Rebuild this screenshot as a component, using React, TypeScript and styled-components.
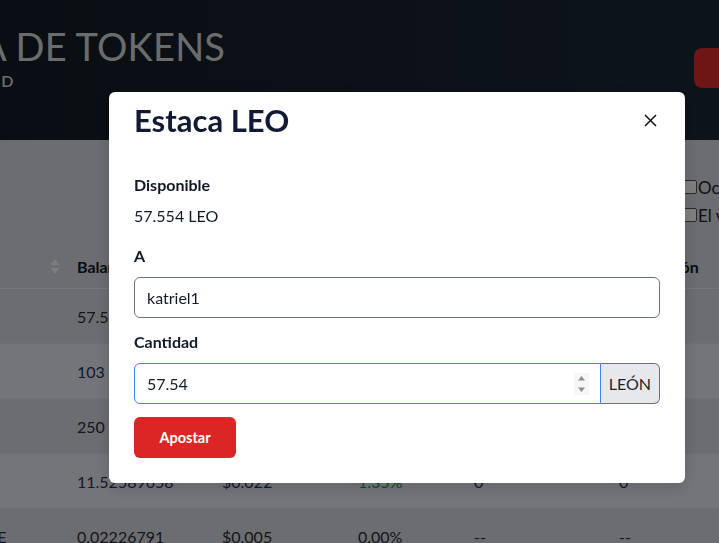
import React, { useEffect, useRef } from "react";
import styled, { createGlobalStyle } from "styled-components";

const FONT = `"Lato", "Noto Sans", "DejaVu Sans", sans-serif`;

const Global = createGlobalStyle`
  html, body { margin: 0; padding: 0; }
  body { font-family: ${FONT}; overflow: hidden; background: #d8dae2; color: #212529; }
  * { box-sizing: border-box; }
`;

const Shell = styled.div`
  width: 100vw;
  height: 100vh;
  overflow: hidden;
`;

/* page is wider than the window and scrolled horizontally */
const Page = styled.div`
  width: 1160px;
  margin-left: -200px;
`;

const Header = styled.header`
  height: 140px;
  padding: 24px 45px 0 15px;
  display: flex;
  align-items: flex-start;
  justify-content: space-between;
  background: linear-gradient(90deg, #131a24 0%, #1b2b38 100%);
`;

const TitleBlock = styled.div`
  display: flex;
  flex-direction: column;
  gap: 3px;
`;

const PageTitle = styled.h1`
  margin: 0;
  font-size: 38px;
  line-height: 44px;
  font-weight: 400;
  color: #d6d8dc;
  letter-spacing: 0.2px;
`;

const PageSub = styled.div`
  font-size: 16px;
  line-height: 20px;
  font-weight: 600;
  color: #d6d8dc;
  letter-spacing: 1px;
`;

const HeaderButton = styled.button`
  margin-top: 24px;
  width: 221px;
  height: 40px;
  border: 0;
  border-radius: 8px;
  background: #dc2a2a;
  color: #fff;
  font: 700 15px ${FONT};
`;

const Content = styled.main`
  padding: 35px 45px 0;
`;

const Toolbar = styled.div`
  display: flex;
  justify-content: flex-end;
`;

const Filters = styled.div`
  width: 232px;
  display: flex;
  flex-direction: column;
  gap: 4px;
`;

const FilterRow = styled.label`
  height: 24px;
  display: flex;
  align-items: center;
  gap: 1px;
  font-size: 17px;
  color: #212529;
  white-space: nowrap;
`;

const Check = styled.span`
  width: 14px;
  height: 14px;
  border: 1px solid #555;
  background: #fff;
  border-radius: 2px;
`;

const cols = "224px 145px 136px 116px 145px 1fr";

const TableWrap = styled.div`
  margin-top: 18px;
`;

const HeadRow = styled.div`
  display: grid;
  grid-template-columns: ${cols};
  height: 44px;
  align-items: center;
  border-bottom: 1px solid #eef0f4;
`;

const HeadCell = styled.div`
  padding: 0 9px 0 8px;
  font-size: 16px;
  font-weight: 700;
  color: #111827;
  display: flex;
  align-items: center;
  justify-content: space-between;
  white-space: nowrap;
`;

const Row = styled.div<{ $alt?: boolean }>`
  display: grid;
  grid-template-columns: ${cols};
  height: 55px;
  align-items: center;
  background: ${(p) => (p.$alt ? "#e8eaf0" : "#d8dae2")};
  color: ${(p) => (p.$alt ? "#1e3566" : "#2a2d38")};
  border-bottom: 1px solid #dfe1e7;
`;

const Cell = styled.div<{ $tone?: "up" }>`
  padding: 0 8px;
  font-size: 16px;
  white-space: nowrap;
  color: ${(p) => (p.$tone === "up" ? "#15a046" : "inherit")};
`;

const Backdrop = styled.div`
  position: fixed;
  inset: 0;
  background: rgba(0, 0, 0, 0.5);
`;

const Dialog = styled.div`
  position: absolute;
  top: 92px;
  left: 109px;
  width: 576px;
  background: #fff;
  border-radius: 6px;
  box-shadow: 0 4px 16px rgba(0, 0, 0, 0.15);
`;

const DialogHeader = styled.div`
  height: 56px;
  padding: 0 25px;
  display: flex;
  align-items: center;
  justify-content: space-between;
`;

const DialogTitle = styled.h2`
  margin: 0;
  font-size: 31px;
  line-height: 36px;
  font-weight: 700;
  color: #111a33;
`;

const CloseButton = styled.button`
  width: 20px;
  height: 20px;
  padding: 0;
  border: 0;
  background: transparent;
  display: flex;
  align-items: center;
  justify-content: center;
  cursor: pointer;
`;

const DialogBody = styled.div`
  padding: 26px 25px 25px;
  display: flex;
  flex-direction: column;
`;

const Field = styled.div<{ $gap: number; $after: number }>`
  display: flex;
  flex-direction: column;
  gap: ${(p) => p.$gap}px;
  margin-bottom: ${(p) => p.$after}px;
`;

const Label = styled.label`
  font-size: 16px;
  line-height: 22px;
  font-weight: 700;
  color: #111827;
`;

const Value = styled.div`
  font-size: 16px;
  line-height: 22px;
  color: #111827;
`;

const TextInput = styled.input`
  height: 41px;
  width: 100%;
  padding: 0 12px;
  border: 1px solid #6b7280;
  border-radius: 6px;
  font: 400 16px ${FONT};
  color: #111827;
  outline: none;
  background: #fff;
`;

const Group = styled.div`
  display: flex;
  height: 41px;
`;

const NumberBox = styled.div`
  flex: 1;
  display: flex;
  align-items: center;
  border: 1px solid #3b82f6;
  border-radius: 6px 0 0 6px;
  padding-right: 11px;
  background: #fff;
`;

const NumberInput = styled.input`
  flex: 1;
  min-width: 0;
  height: 100%;
  border: 0;
  padding: 0 12px;
  background: transparent;
  font: 400 16px ${FONT};
  color: #111827;
  outline: none;
  caret-color: #111;
`;

const Spinner = styled.span`
  width: 15px;
  height: 22px;
  display: flex;
  background: #f6f6f6;
`;

const Addon = styled.span`
  display: flex;
  align-items: center;
  padding: 0 8px;
  border: 1px solid #6b7280;
  border-left: 0;
  border-radius: 0 6px 6px 0;
  background: #e7e8eb;
  font-size: 16px;
  color: #212529;
`;

const SubmitButton = styled.button`
  align-self: flex-start;
  width: 102px;
  height: 41px;
  border: 0;
  border-radius: 6px;
  background: #dc2626;
  color: #fff;
  font: 700 14.5px ${FONT};
`;

const SortIcon = () => (
  <svg width="10" height="17" viewBox="0 0 10 17" aria-hidden>
    <path d="M5 1 L9.5 7 H0.5 Z" fill="#fafbff" />
    <path d="M5 16 L9.5 10 H0.5 Z" fill="#fafbff" />
  </svg>
);

const CloseIcon = () => (
  <svg width="13" height="13" viewBox="0 0 13 13" aria-hidden>
    <path d="M1 1 L12 12 M12 1 L1 12" stroke="#111" strokeWidth="1.5" fill="none" />
  </svg>
);

const SpinIcon = () => (
  <svg width="15" height="22" viewBox="0 0 15 22" aria-hidden>
    <path d="M7.5 3 L11 7.5 H4 Z" fill="#8e8e8e" />
    <path d="M7.5 19 L11 14.5 H4 Z" fill="#8e8e8e" />
  </svg>
);

const rows = [
  { name: "LEO", bal: "57.554", price: "$0.090", chg: "2.10%", v: "5.17", s: "0" },
  { name: "SWAP.HIVE", bal: "103", price: "$0.290", chg: "0.85%", v: "29.8", s: "0" },
  { name: "SPS", bal: "250", price: "$0.011", chg: "0.40%", v: "2.75", s: "0" },
  { name: "BEE", bal: "11.52589658", price: "$0.022", chg: "1.35%", v: "0", s: "0", up: true },
  { name: "Token - WORKERBEE", bal: "0.02226791", price: "$0.005", chg: "0.00%", v: "--", s: "--" },
];

export default function App() {
  const amountRef = useRef<HTMLInputElement>(null);
  useEffect(() => {
    const el = amountRef.current;
    if (el) {
      el.focus();
      const n = el.value.length;
      el.setSelectionRange(n, n);
    }
  }, []);

  return (
    <Shell>
      <Global />
      <Page>
        <Header>
          <TitleBlock>
            <PageTitle>BILLETERA DE TOKENS</PageTitle>
            <PageSub>VALOR: $11,093.14 USD</PageSub>
          </TitleBlock>
          <HeaderButton>Enviar</HeaderButton>
        </Header>
        <Content>
          <Toolbar>
            <Filters>
              <FilterRow>
                <Check />
                Ocultar saldos cero
              </FilterRow>
              <FilterRow>
                <Check />
                El valor en USD
              </FilterRow>
            </Filters>
          </Toolbar>
          <TableWrap>
            <HeadRow>
              <HeadCell>
                Token <SortIcon />
              </HeadCell>
              <HeadCell>Balance</HeadCell>
              <HeadCell>Precio</HeadCell>
              <HeadCell>Cambio</HeadCell>
              <HeadCell>Valor</HeadCell>
              <HeadCell>Delegación</HeadCell>
            </HeadRow>
            {rows.map((r, i) => (
              <Row key={r.name} $alt={i % 2 === 1}>
                <Cell>{r.name}</Cell>
                <Cell>{r.bal}</Cell>
                <Cell>{r.price}</Cell>
                <Cell $tone={r.up ? "up" : undefined}>{r.chg}</Cell>
                <Cell>{r.v}</Cell>
                <Cell>{r.s}</Cell>
              </Row>
            ))}
          </TableWrap>
        </Content>
      </Page>

      <Backdrop>
        <Dialog role="dialog" aria-modal="true">
          <DialogHeader>
            <DialogTitle>Estaca LEO</DialogTitle>
            <CloseButton aria-label="Cerrar">
              <CloseIcon />
            </CloseButton>
          </DialogHeader>
          <DialogBody>
            <Field $gap={9} $after={18}>
              <Label>Disponible</Label>
              <Value>57.554 LEO</Value>
            </Field>
            <Field $gap={10} $after={13}>
              <Label htmlFor="to">A</Label>
              <TextInput id="to" defaultValue="katriel1" />
            </Field>
            <Field $gap={10} $after={13}>
              <Label htmlFor="amount">Cantidad</Label>
              <Group>
                <NumberBox>
                  <NumberInput id="amount" ref={amountRef} inputMode="decimal" defaultValue="57.54" />
                  <Spinner>
                    <SpinIcon />
                  </Spinner>
                </NumberBox>
                <Addon>LEÓN</Addon>
              </Group>
            </Field>
            <SubmitButton>Apostar</SubmitButton>
          </DialogBody>
        </Dialog>
      </Backdrop>
    </Shell>
  );
}
